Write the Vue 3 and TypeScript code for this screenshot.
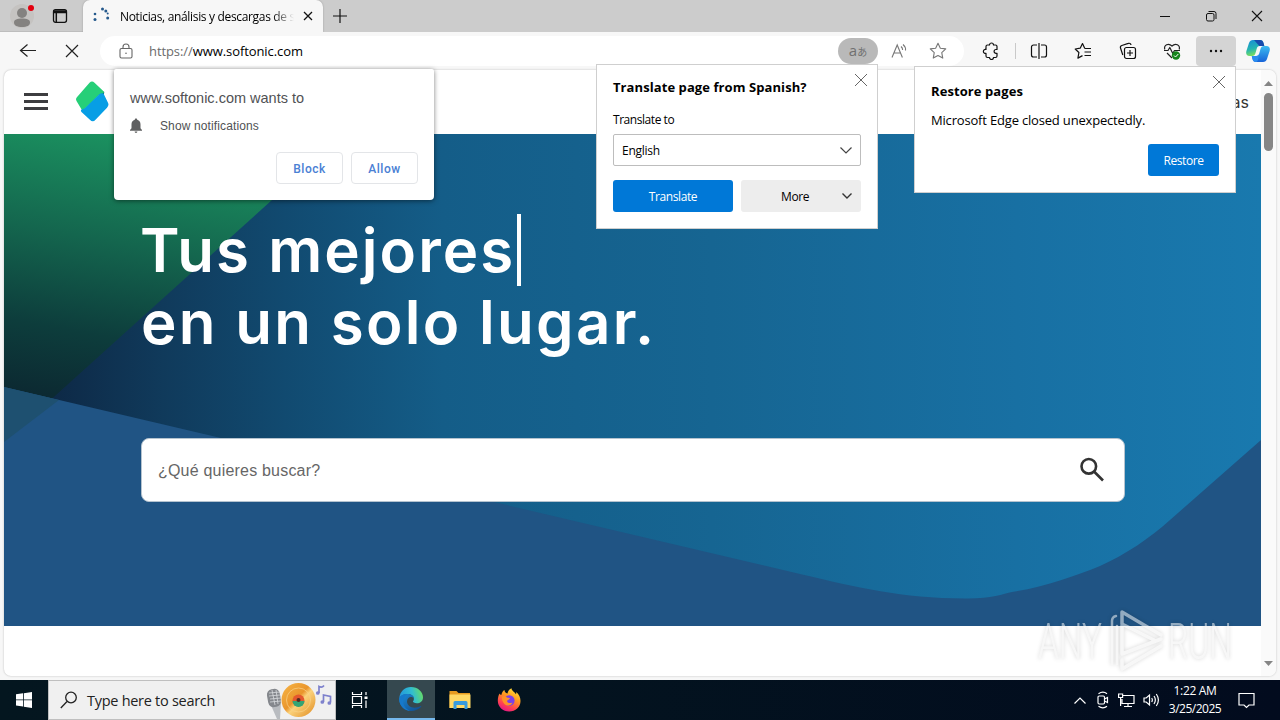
<script setup lang="ts">
import { ref } from 'vue'

const tabTitle = ref('Noticias, análisis y descargas de s')
const host = ref('www.softonic.com')
const language = ref('English')
const query = ref('')
const clock = ref({ time: '1:22 AM', date: '3/25/2025' })
</script>

<template>
  <div class="desktop">
    <div class="titlebar">
      <div class="tab-tools">
        <svg class="avatar" width="26" height="28" viewBox="0 0 26 28">
          <circle cx="13" cy="14" r="12" fill="#c5c3c1" />
          <circle cx="13" cy="11" r="5" fill="#848280" />
          <path d="M5 20.500c0-3 3-4 8-4s8 1 8 4-3 4.500-8 4.500-8-1.500-8-4.500z" fill="#848280" />
          <circle cx="22" cy="6" r="3" fill="#e3000f" />
        </svg>
        <svg width="16" height="16" viewBox="0 0 16 16" fill="none" stroke="#111" stroke-width="1.300">
          <rect x="1.500" y="1.700" width="13" height="12.600" rx="2" />
          <path d="M1.500 3h13M1.500 4.500h13M4.300 4v10" stroke-width="1.500" />
        </svg>
      </div>
      <div class="tab">
        <svg width="18" height="18" viewBox="0 0 18 18" fill="#25598c">
          <circle cx="3" cy="7" r="1.300" />
          <circle cx="3" cy="12.500" r="1.500" />
          <circle cx="10.500" cy="2" r="1.500" />
          <circle cx="13.800" cy="4" r="1.500" />
          <circle cx="15.700" cy="6.500" r="1" />
          <circle cx="15.700" cy="11" r="1.500" />
        </svg>
        <span class="tab-title">{{ tabTitle }}</span>
        <svg class="tab-close" width="10" height="10" viewBox="0 0 10 10" stroke="#111" stroke-width="1.300">
          <path d="M1 1l8 8M9 1L1 9" />
        </svg>
      </div>
      <svg class="new-tab" width="14" height="14" viewBox="0 0 14 14" stroke="#111" stroke-width="1.200">
        <path d="M7 0v14M0 7h14" />
      </svg>
      <div class="win-buttons">
        <svg width="12" height="12" viewBox="0 0 12 12" stroke="#111"><path d="M1 6.500h10" /></svg>
        <svg width="12" height="12" viewBox="0 0 12 12" fill="none" stroke="#111">
          <rect x="1.500" y="3.500" width="7.500" height="7.500" rx="1.500" />
          <path d="M3.500 1.500h5.500a2 2 0 0 1 2 2v5.500" />
        </svg>
        <svg width="12" height="12" viewBox="0 0 12 12" stroke="#111" stroke-width="1.100">
          <path d="M1 1l10 10M11 1L1 11" />
        </svg>
      </div>
    </div>

    <div class="toolbar">
      <div class="nav">
        <svg width="18" height="16" viewBox="0 0 18 16" fill="none" stroke="#222" stroke-width="1.200">
          <path d="M17 7.500H1.500M8.500 1.500l-7 6 7 6" />
        </svg>
        <svg width="14" height="14" viewBox="0 0 14 14" stroke="#222" stroke-width="1.200">
          <path d="M1 1l12 12M13 1L1 13" />
        </svg>
      </div>
      <div class="address">
        <svg class="lock" width="14" height="16" viewBox="0 0 14 16" fill="none" stroke="#666" stroke-width="1.100">
          <rect x="1" y="5.500" width="12" height="9.500" rx="1.500" />
          <path d="M4 5.500V4a3 3 0 0 1 6 0v1.500" />
          <circle cx="7" cy="10.300" r=".8" fill="#666" stroke="none" />
        </svg>
        <span class="url"><span class="scheme">https://</span>{{ host }}</span>
        <span class="translate-chip">a<small>あ</small></span>
        <svg class="read-aloud" width="18" height="16" viewBox="0 0 18 16" fill="none" stroke="#777" stroke-width="1.100">
          <path d="M1 14.500L6.200 2 11.400 14.500M2.900 10h6.600" />
          <path d="M10 3.500q1.800 1.500 1.600 3.500M12 1.500q3 2.500 2.500 6" />
        </svg>
        <svg class="star" width="18" height="18" viewBox="0 0 18 18" fill="none" stroke="#777" stroke-width="1.100" stroke-linejoin="round">
          <path d="M9 1.200l2.350 5 5.400.7-4 3.750 1 5.450L9 13.450 4.250 16.100l1-5.450-4-3.750 5.400-.7z" />
        </svg>
      </div>
      <div class="actions">
        <span class="slot">
          <svg width="18" height="18" viewBox="0 0 18 18" fill="none" stroke="#111" stroke-width="1.200" stroke-linejoin="round">
            <path d="M5.500 3h2a2 2 0 0 1 4 0h2q1.500 0 1.500 1.500v3h-1a1.800 1.800 0 0 0 0 3.800h1V14q0 1.500-1.500 1.500h-2a2 2 0 0 1-4 0h-2Q4 15.500 4 14v-2.700a2 2 0 1 1 0-3.800v-3Q4 3 5.500 3z" />
          </svg>
        </span>
        <span class="divider"></span>
        <span class="slot">
          <svg width="18" height="18" viewBox="0 0 18 18" fill="none" stroke="#111" stroke-width="1.200">
            <path d="M7 3H3.500a2 2 0 0 0-2 2v8a2 2 0 0 0 2 2H7M11 3h3.500a2 2 0 0 1 2 2v8a2 2 0 0 1-2 2H11M9 1v16" />
          </svg>
        </span>
        <span class="slot">
          <svg width="18" height="18" viewBox="0 0 18 18" fill="none" stroke="#111" stroke-width="1.200" stroke-linejoin="round">
            <path d="M10.700 6.200L8.500 1.500l-2.300 4.700-5 .8 3.700 3.500-1 5.600 4.600-2.500" />
            <path d="M10.500 6.500H17M10.500 10H17M10.500 13.500H17" />
          </svg>
        </span>
        <span class="slot">
          <svg width="18" height="18" viewBox="0 0 18 18" fill="none" stroke="#111" stroke-width="1.200">
            <rect x="5.500" y="5.500" width="11" height="11" rx="2" />
            <path d="M11 8v6M8 11h6M3.800 13L1.500 6a2 2 0 0 1 1.300-2.500l6.500-2.100A2 2 0 0 1 12 3" />
          </svg>
        </span>
        <span class="slot">
          <svg width="18" height="18" viewBox="0 0 18 18" fill="none" stroke="#222" stroke-width="1.200" stroke-linejoin="round">
            <path d="M1.800 7.500C.5 3 5.500.5 9 4c3.500-3.500 8.500-1 7.200 3.500M4 11l5 5" />
            <path d="M1 8.500h4L6.800 5.500l3 6L11.500 8.500H17" />
            <circle cx="13" cy="13.500" r="4.200" fill="#17851d" stroke="none" />
            <path d="M11 13.500l1.500 1.500 2.800-3" stroke="#fff" stroke-width="1" />
          </svg>
        </span>
        <span class="slot more-slot">
          <svg width="16" height="4" viewBox="0 0 16 4" fill="#111">
            <circle cx="3" cy="2" r="1.200" /><circle cx="8" cy="2" r="1.200" /><circle cx="13" cy="2" r="1.200" />
          </svg>
        </span>
        <svg class="copilot" width="24" height="24" viewBox="0 0 24 24">
          <defs>
            <linearGradient id="cp1" x1="0" y1="0" x2=".3" y2="1">
              <stop offset="0" stop-color="#168bd8" /><stop offset=".6" stop-color="#25b5b0" /><stop offset="1" stop-color="#7ce05a" />
            </linearGradient>
            <linearGradient id="cp2" x1="0" y1="0" x2="0" y2="1">
              <stop offset="0" stop-color="#3bbcf0" /><stop offset="1" stop-color="#1763d8" />
            </linearGradient>
          </defs>
          <path d="M7 1h7c2 0 3 1 3.500 3l.8 3h-4.500c-2 0-2.600 1-3 2.500L9.500 14c-.5 2-1.500 3-3.500 3H3.500C.5 17-.3 14.800.4 12L3 4C3.700 2 5 1 7 1z" fill="url(#cp1)" />
          <path d="M8 1h6c2 0 3 1 3.500 3l.8 3h-5z" fill="#174bad" />
          <path d="M17 23h-7c-2 0-3-1-3.500-3l-.8-3h4.500c2 0 2.600-1 3-2.500l1.300-4.500c.5-2 1.500-3 3.500-3h2.500c3 0 3.800 2.200 3.100 5L21 20c-.7 2-2 3-4 3z" fill="url(#cp2)" />
          <path d="M6 17h4.200c2 0 2.600-1 3-2.500l-1 5.500c-.4 2-1.200 3-2.200 3-2 0-3-1-3.500-3z" fill="#2a8df0" />
        </svg>
      </div>
    </div>

    <div class="viewport">
      <div class="page">
        <header class="site-header">
          <span class="burger"><i></i><i></i><i></i></span>
          <svg class="logo" width="34" height="42" viewBox="0 0 34 42">
            <path d="M21 12l8-1.500q1 2-2 5z" fill="#126c6b" />
            <path d="M14.500 1.800q2.500-2.600 5 0l8.500 8q2 2-.5 2.700-2.500.5-4 2L7.500 30 1.800 20.500q-1.800-2.500.5-4.700z" fill="#26cf78" />
            <path d="M28.500 12.500l4.500 9.200q1.300 2.700-1 5L20.500 38.800q-2.800 3-5.600 0L6.500 31q-1.500-2 .8-2.700 1.800-.4 3-1.600L24 13.500q2.300-2 4.500-1z" fill="#079ee5" />
          </svg>
          <span class="header-link">Noticias</span>
        </header>

        <section class="hero">
          <svg class="hero-art" viewBox="4 134 1257 492" width="1257" height="492">
            <defs>
              <linearGradient id="sea" gradientUnits="userSpaceOnUse" x1="40" y1="0" x2="1261" y2="0">
                <stop offset="0" stop-color="#0d2744" />
                <stop offset=".1" stop-color="#103a5b" />
                <stop offset=".2" stop-color="#114a70" />
                <stop offset=".33" stop-color="#145d88" />
                <stop offset=".55" stop-color="#166592" />
                <stop offset=".8" stop-color="#1870a3" />
                <stop offset="1" stop-color="#1979ae" />
              </linearGradient>
              <linearGradient id="leaf" gradientUnits="userSpaceOnUse" x1="70" y1="124" x2="22" y2="390">
                <stop offset="0" stop-color="#1b9260" />
                <stop offset=".4" stop-color="#14664e" />
                <stop offset=".75" stop-color="#0d3d3c" />
                <stop offset="1" stop-color="#0c2a32" />
              </linearGradient>
            </defs>
            <path d="M4 134h1257v492H4z" fill="url(#sea)" />
            <path d="M4 134h341L4 442z" fill="url(#leaf)" />
            <path d="M4 387L800 574C860 588 900 598 965 598.500C990 599 1003 594 1012 592C1045 587 1075 576 1100 566C1125 555 1150 538 1170 520L1261 440V626H4z" fill="#205484" />
            <path d="M4 387l55 13L4 442z" fill="#1e5070" />
          </svg>
          <div class="hero-body">
            <h1>
              <span class="line-a">Tus mejores</span><span class="caret"></span><br />
              <span class="line-b">en un solo lugar.</span>
            </h1>
            <div class="search">
              <input v-model="query" placeholder="¿Qué quieres buscar?" />
              <svg width="26" height="26" viewBox="0 0 26 26" fill="none" stroke="#333" stroke-width="2.600">
                <circle cx="9.800" cy="9.300" r="7.300" />
                <path d="M15 14.500l9 9" />
              </svg>
            </div>
          </div>
        </section>
      </div>
      <div class="scrollbar">
        <svg width="9" height="5" viewBox="0 0 9 5"><path d="M4.500 0L9 5H0z" fill="#858585" /></svg>
        <span class="thumb"></span>
        <svg width="9" height="5" viewBox="0 0 9 5"><path d="M0 0h9L4.500 5z" fill="#858585" /></svg>
      </div>
    </div>

    <div class="popup permission">
      <p class="asks">www.softonic.com wants to</p>
      <p class="what">
        <svg width="14" height="16" viewBox="0 0 14 16" fill="#5f6061">
          <path d="M7 .5c.8 0 1.200.5 1.200 1.300C10.500 2.400 11.500 4.200 11.500 6.500v3.700L13 12v.8H1V12l1.500-1.800V6.500c0-2.300 1-4.100 3.300-4.700C5.800 1 6.200.5 7 .5zM5.600 13.500h2.800a1.400 1.400 0 0 1-2.800 0z" />
        </svg>
        <span>Show notifications</span>
      </p>
      <div class="choice">
        <button type="button">Block</button>
        <button type="button">Allow</button>
      </div>
    </div>

    <div class="popup translate">
      <svg class="dismiss" width="12" height="12" viewBox="0 0 12 12" stroke="#666"><path d="M0 0l12 12M12 0L0 12" /></svg>
      <h2>Translate page from Spanish?</h2>
      <label>Translate to</label>
      <div class="select">
        <span>{{ language }}</span>
        <svg width="12" height="7" viewBox="0 0 12 7" fill="none" stroke="#444" stroke-width="1.200"><path d="M.5.5L6 6 11.500.5" /></svg>
      </div>
      <div class="choice">
        <button type="button" class="primary">Translate</button>
        <button type="button" class="secondary">
          <span>More</span>
          <svg width="10" height="6" viewBox="0 0 10 6" fill="none" stroke="#333" stroke-width="1.400"><path d="M.5.5L5 5 9.500.5" /></svg>
        </button>
      </div>
    </div>

    <div class="popup restore">
      <svg class="dismiss" width="12" height="12" viewBox="0 0 12 12" stroke="#666"><path d="M0 0l12 12M12 0L0 12" /></svg>
      <h2>Restore pages</h2>
      <p>Microsoft Edge closed unexpectedly.</p>
      <button type="button" class="primary">Restore</button>
    </div>

    <svg class="watermark" width="210" height="74" viewBox="1030 604 210 74">
      <g fill="none" stroke="#f2f2f2" stroke-width="3.500" stroke-linejoin="round" stroke-linecap="round">
        <path d="M1122 642V612L1161 635M1122 624L1154 640M1122 642V654L1161 639M1122 660V669L1161 646" />
        <path d="M1112 664V621q0-4 4-5M1117 664V626" stroke-width="2.500" />
      </g>
      <g font-family="Roboto, sans-serif" font-size="50" font-weight="300" fill="#f2f2f2">
        <text x="1038" y="659" textLength="64" lengthAdjust="spacingAndGlyphs">ANY</text>
        <text x="1168" y="659" textLength="64" lengthAdjust="spacingAndGlyphs">RUN</text>
      </g>
    </svg>

    <div class="taskbar">
      <div class="start">
        <svg width="16" height="16" viewBox="0 0 16 16" fill="#fff">
          <path d="M0 2.300l7-1v6.200H0zM7.800 1.200L16 0v7.500H7.800zM0 8.300h7v6.300l-7-1zM7.800 8.300H16V16l-8.200-1.200z" />
        </svg>
      </div>
      <div class="task-search">
        <svg width="18" height="18" viewBox="0 0 18 18" fill="none" stroke="#222" stroke-width="1.300">
          <circle cx="11" cy="6.500" r="5.300" /><path d="M7 10.500L.8 17" />
        </svg>
        <span>Type here to search</span>
        <svg class="doodle" width="68" height="38" viewBox="266 681 68 38">
          <defs>
            <linearGradient id="gold" x1="0" y1="0" x2="1" y2="1">
              <stop offset="0" stop-color="#f7b648" /><stop offset=".45" stop-color="#e9952c" />
              <stop offset=".55" stop-color="#fbd27c" /><stop offset="1" stop-color="#e08a1e" />
            </linearGradient>
          </defs>
          <path d="M270 703l7 16h3l1-17z" fill="#b9bcc0" />
          <rect x="267.500" y="689" width="13" height="18" rx="5.500" fill="#85888d" transform="rotate(-10 274 698)" />
          <path d="M269 693l11-1M269 696l11-1M270 699l11-1M270 702l11-1M272 690l3 15M276 690l2 14" stroke="#d8dadd" stroke-width=".8" />
          <circle cx="298.500" cy="700" r="17" fill="url(#gold)" />
          <circle cx="298.500" cy="700" r="12" fill="none" stroke="#f9d28a" stroke-width=".7" />
          <circle cx="298.500" cy="700.500" r="6" fill="#e4572e" />
          <path d="M292.500 701a6 6 0 0 0 12 0z" fill="#34a474" />
          <circle cx="298.500" cy="700" r="2" fill="#542c20" />
          <g fill="none" stroke="#7d80cc" stroke-width="1.700">
            <path d="M319 693v-6.500q3 1.500 5-1M323.500 702v-7l7 1.500v6" />
            <circle cx="317.800" cy="693" r="1" /><circle cx="322.300" cy="702" r="1" /><circle cx="329.300" cy="703" r="1" />
          </g>
        </svg>
      </div>
      <div class="task">
        <svg width="18" height="16" viewBox="0 0 18 16" fill="none" stroke="#fff" stroke-width="1.200">
          <path d="M1.500 0v2.500h9V0M1.500 16v-2.500h9V16M1.500 4.500h9v7h-9zM15 0v3M15 8.500V16" />
          <path d="M13.500 4.500h3v2.500h-3z" fill="#fff" stroke="none" />
        </svg>
      </div>
      <div class="task active">
        <svg width="24" height="24" viewBox="0 0 24 24">
          <defs>
            <linearGradient id="ed1" x1="0" y1=".5" x2="1" y2=".3">
              <stop offset="0" stop-color="#2296dc" /><stop offset=".55" stop-color="#31bdd0" /><stop offset="1" stop-color="#69dd60" />
            </linearGradient>
            <linearGradient id="ed2" x1="0" y1="0" x2="1" y2="1">
              <stop offset="0" stop-color="#1b8cd9" /><stop offset="1" stop-color="#114a8b" />
            </linearGradient>
          </defs>
          <path d="M.3 11C1 4.500 5.700 0 12 0c7 0 12 5 12 10.300 0 4-3 6-6.200 6-2.500 0-3.900-1-3.900-1.700 0-.6 1-1.100 1-2.900C14.900 9 12 7 8.500 7 4.500 7 1.500 9 .3 11z" fill="url(#ed1)" />
          <path d="M.3 11C1.500 8.500 4.500 7 8.500 7c3.500 0 6.400 2 6.400 4.700-.5-1-1.700-1.700-3-1.700-2 0-3.900 1.800-3.900 4.500 0 3.700 3.500 6.200 7.500 6.200 2.500 0 4.600-.7 6-1.600.5-.3 1 .2.600.7C20 22.500 16 24 12 24 5 24-.5 18 .3 11z" fill="url(#ed2)" />
          <path d="M8.500 7C5.500 9 3.800 12 4.300 16c.5 4 4 7.500 7.700 8C5 24-.5 18 .3 11 1.500 8.500 4.500 7 8.500 7z" fill="#1679cb" />
        </svg>
      </div>
      <div class="task">
        <svg width="22" height="20" viewBox="0 0 22 20">
          <path d="M.5 1h7l2 2H21v15H.5z" fill="#e79b20" />
          <path d="M.5 4.500H21.500V18H.5z" fill="#ffd865" />
          <path d="M4.500 19v-6.500q0-1.500 1.500-1.500h11q1.500 0 1.500 1.500V19h-3v-4h-8V19z" fill="#379bdd" />
        </svg>
      </div>
      <div class="task">
        <svg width="24" height="24" viewBox="0 0 24 24">
          <defs>
            <linearGradient id="fox" x1=".8" y1="0" x2=".3" y2="1">
              <stop offset="0" stop-color="#ffe63b" /><stop offset=".4" stop-color="#ff9a1f" />
              <stop offset=".75" stop-color="#ff4051" /><stop offset="1" stop-color="#e31587" />
            </linearGradient>
          </defs>
          <path d="M2.500 5.500c.5 1 1 1.300 1.800 1.500C5 4 6.500 2.500 7.500 2c0 2 1 3 3 3.500C11 3 12 1.500 14.500.3c0 2.500 3 3.500 4.500 6 .3-.8.300-1.500 0-2.300 3 2 4.500 5.500 4.500 9C23.500 19 18.500 23.500 12.200 23.500S.8 19 .8 12.800c0-3 .7-5.300 1.700-7.300z" fill="url(#fox)" />
          <circle cx="12.300" cy="12.500" r="5.300" fill="#7a40e8" />
          <path d="M5 8.500c2-1 4-.5 5 1 1 .3 2.500.2 3 .7-.5 1.500-2.500 1.300-3 2.800 0 2 3.500 2.700 5.500 1.500-1 3.500-5.500 4-8 1.500C5.500 14 4.500 11 5 8.500z" fill="#ff9226" />
        </svg>
      </div>
      <div class="tray">
        <svg width="12" height="7" viewBox="0 0 12 7" fill="none" stroke="#fff" stroke-width="1.200"><path d="M.5 6.500L6 1l5.500 5.500" /></svg>
        <svg width="14" height="18" viewBox="0 0 14 18" fill="none" stroke="#fff" stroke-width="1.200">
          <rect x="2" y="5" width="6.500" height="8" rx="1.200" />
          <path d="M8.500 8l3-1.500v5L8.500 10M2.500 2.700Q7-.5 11 2.700M2.500 15.300q4.500 3.200 8.500 0" />
        </svg>
        <svg width="17" height="16" viewBox="0 0 17 16" fill="none" stroke="#fff" stroke-width="1.200">
          <path d="M5 3.500h11v8H4V7M10 11.500v3M6 14.500h8M.6 2h4v3.500h-4zM2.600 5.500V14" />
        </svg>
        <svg width="17" height="14" viewBox="0 0 17 14" fill="none" stroke="#fff" stroke-width="1.200">
          <path d="M1 5h2.200L6.500 2v10L3.200 9H1zM8.700 5q1.300 2 0 4M11 3q2.700 4 0 8M13.300 1q4.200 6 0 12" />
        </svg>
        <div class="clock">
          <span>{{ clock.time }}</span>
          <span class="date">{{ clock.date }}</span>
        </div>
        <svg class="notes" width="17" height="17" viewBox="0 0 17 17" fill="none" stroke="#fff" stroke-width="1.200">
          <path d="M1 1.500h15v11.500h-5L8.500 15.500 6 13H1z" />
        </svg>
      </div>
    </div>
  </div>
</template>

<style>
body {
  margin: 0;
  overflow: hidden;
}
</style>

<style scoped>
.desktop {
  position: relative;
  width: 1280px;
  height: 720px;
  display: flex;
  flex-direction: column;
  overflow: hidden;
  background: #f7f7f7;
  font-family: 'Open Sans', 'Noto Sans CJK JP', sans-serif;
  font-size: 12px;
  color: #000;
}
svg {
  display: block;
  flex: none;
}
p,
h1,
h2 {
  margin: 0;
}
button {
  font: inherit;
  border: 0;
  padding: 0;
  box-sizing: border-box;
}

/* window frame */
.titlebar {
  display: flex;
  align-items: center;
  height: 32px;
  background: #ccc;
}
.tab-tools {
  display: flex;
  align-items: center;
  gap: 17px;
  width: 74px;
  height: 32px;
  padding-left: 9px;
  box-shadow: inset 0 -1px #bdbdbd;
}
.tab {
  display: flex;
  align-items: center;
  width: 231px;
  height: 32px;
  padding-left: 9px;
  background: #f7f7f7;
  border-radius: 7px 7px 0 0;
  box-shadow: 0 0 2px #999;
}
.tab-title {
  width: 174px;
  margin-left: 10px;
  white-space: nowrap;
  letter-spacing: -0.330px;
  mask-image: linear-gradient(90deg, #000 88%, transparent 100%);
}
.tab-close {
  margin-left: 9px;
}
.new-tab {
  margin-left: 10px;
}
.win-buttons {
  display: flex;
  gap: 34px;
  margin-left: auto;
  margin-right: 17px;
}
.toolbar {
  display: flex;
  align-items: center;
  height: 38px;
  background: #f7f7f7;
}
.nav {
  display: flex;
  align-items: center;
  gap: 28px;
  width: 81px;
  padding-left: 19px;
}
.address {
  display: flex;
  align-items: center;
  box-sizing: border-box;
  width: 864px;
  height: 30px;
  padding-left: 19px;
  border-radius: 15px;
  background: #fff;
}
.url {
  flex: 1;
  margin-left: 16px;
  font-size: 13px;
  letter-spacing: -0.080px;
}
.scheme {
  color: #6b6b6b;
}
.translate-chip {
  width: 40px;
  height: 26px;
  border-radius: 13px;
  background: #b9b9b9;
  color: #707070;
  font-size: 15px;
  line-height: 24px;
  text-align: center;
}
.translate-chip small {
  font-size: 10px;
}
.read-aloud {
  margin-left: 13px;
}
.star {
  margin: 0 17px 0 20px;
}
.actions {
  display: flex;
  align-items: center;
  margin-left: 5px;
}
.slot {
  display: flex;
  align-items: center;
  justify-content: center;
  width: 44.500px;
  height: 30px;
}
.divider {
  width: 1px;
  height: 16px;
  margin: 0 1px;
  background: #c9c9c9;
}
.more-slot {
  width: 40px;
  margin-left: 1px;
  border-radius: 4px;
  background: #d4d4d4;
}
.copilot {
  margin-left: 10px;
}

/* page */
.viewport {
  display: flex;
  height: 606px;
  margin: 0 4px 4px;
  background: #fff;
  border-radius: 7px;
  box-shadow: 0 0 2px #b5b5b5;
  overflow: hidden;
}
.page {
  width: 1257px;
}
.site-header {
  display: flex;
  align-items: center;
  box-sizing: border-box;
  height: 64px;
  padding: 0 12px 0 20px;
}
.burger {
  display: flex;
  flex-direction: column;
  gap: 4px;
  width: 24px;
  padding-bottom: 1px;
}
.burger i {
  height: 3px;
  background: #3d3d40;
}
.logo {
  margin-left: 27px;
}
.header-link {
  margin-left: auto;
  font-family: Inter, sans-serif;
  font-size: 16px;
  color: #333;
}
.hero {
  display: grid;
  height: 492px;
}
.hero-art,
.hero-body {
  grid-area: 1 / 1;
}
.hero-body {
  padding: 80px 136px 0 136px;
}
h1 {
  height: 144px;
  font-family: Inter, sans-serif;
  font-size: 60px;
  font-weight: 600;
  line-height: 72px;
  color: #fff;
  white-space: nowrap;
}
.line-a {
  letter-spacing: 2.050px;
}
.line-b {
  margin-left: 1px;
  letter-spacing: 2.300px;
}
.caret {
  display: inline-block;
  width: 4px;
  height: 72px;
  margin-left: 2px;
  background: #fff;
  vertical-align: top;
}
.search {
  display: flex;
  align-items: center;
  box-sizing: border-box;
  height: 64px;
  margin-top: 80px;
  margin-left: 1px;
  padding: 0 19px 0 16px;
  border: 1px solid #b5c3cf;
  border-radius: 8px;
  background: #fff;
}
.search input {
  flex: 1;
  border: 0;
  padding: 2px 0 0;
  outline: 0;
  font: 16px 'Liberation Sans', sans-serif;
  letter-spacing: 0.200px;
}
.search input::placeholder {
  color: #666;
}
.scrollbar {
  display: flex;
  flex-direction: column;
  align-items: center;
  width: 15px;
  padding: 11px 0 10px;
  box-sizing: border-box;
  background: #fafafa;
}
.thumb {
  width: 9px;
  height: 58px;
  margin: 7px 0 auto;
  border-radius: 5px;
  background: #868686;
}

/* floating dialogs */
.popup {
  position: absolute;
  box-sizing: border-box;
  background: #fff;
}
.permission {
  left: 114px;
  top: 69px;
  width: 320px;
  height: 131px;
  padding: 20px 16px 16px;
  border-radius: 2px 2px 4px 4px;
  box-shadow: 0 1px 5px rgba(0, 0, 0, 0.5);
  font-family: 'Liberation Sans', sans-serif;
  color: #505154;
}
.asks {
  font-size: 14.500px;
  line-height: 18px;
}
.what {
  display: flex;
  align-items: center;
  gap: 17px;
  height: 16px;
  margin-top: 11px;
  font-size: 12px;
  letter-spacing: 0.120px;
}
.what svg {
  margin-left: -1px;
}
.choice {
  display: flex;
  gap: 8px;
}
.permission .choice {
  justify-content: flex-end;
  margin-top: 18px;
}
.permission button {
  width: 67px;
  height: 32px;
  padding-top: 1px;
  border: 1px solid #e3e5e8;
  border-radius: 4px;
  background: #fff;
  color: #4a80d4;
  font: 500 12px Roboto, sans-serif;
  letter-spacing: 0.550px;
}
.translate {
  left: 596px;
  top: 64px;
  width: 282px;
  height: 165px;
  padding: 12px 16px 16px;
  border: 1px solid #cfcfcf;
}
.dismiss {
  position: absolute;
  top: 9px;
  right: 10px;
}
.popup h2 {
  font-size: 13px;
  font-weight: 700;
  line-height: 20px;
  letter-spacing: 0.080px;
  white-space: nowrap;
}
.translate label {
  display: block;
  margin-top: 15px;
  line-height: 16px;
  letter-spacing: -0.450px;
}
.select {
  display: flex;
  align-items: center;
  justify-content: space-between;
  box-sizing: border-box;
  height: 32px;
  margin-top: 6px;
  padding: 0 8px;
  border: 1px solid #bdbdbd;
  border-radius: 2px;
  letter-spacing: -0.250px;
}
.translate .choice {
  margin-top: 14px;
}
.translate button {
  width: 120px;
  height: 32px;
}
.popup .primary {
  border-radius: 3px;
  background: #0078d7;
  color: #fff;
  letter-spacing: -0.400px;
}
.popup .secondary {
  display: flex;
  align-items: center;
  padding: 0 9px 0 40px;
  justify-content: space-between;
  border-radius: 3px;
  background: #ededed;
  color: #000;
  letter-spacing: -0.350px;
}
.restore {
  left: 914px;
  top: 66px;
  width: 322px;
  height: 127px;
  padding: 14px 16px;
  border: 1px solid #cfcfcf;
}
.restore p {
  margin-top: 9px;
  font-size: 13px;
  line-height: 20px;
  letter-spacing: -0.180px;
  white-space: nowrap;
}
.restore button {
  display: block;
  width: 71px;
  height: 32px;
  margin: 14px 0 0 auto;
}

.watermark {
  position: absolute;
  left: 1030px;
  top: 604px;
  overflow: visible;
  opacity: 0.55;
  filter: drop-shadow(0 0 2px rgba(0, 0, 0, 0.3));
}

/* taskbar */
.taskbar {
  display: flex;
  height: 40px;
  background: linear-gradient(90deg, #04161f 0%, #03131f 45%, #020b1e 100%);
  color: #fff;
}
.start,
.task {
  display: flex;
  align-items: center;
  justify-content: center;
  width: 48px;
}
.task {
  width: 49px;
}
.task-search + .task {
  width: 51px;
  box-sizing: border-box;
  padding-right: 4px;
}
.task.active {
  box-sizing: border-box;
  width: 48px;
  background: #35484f;
  border-bottom: 2px solid #76b9ed;
}
.task-search {
  display: flex;
  align-items: center;
  box-sizing: border-box;
  width: 288px;
  padding-left: 11px;
  border: 1px solid #bfbfbf;
  background: #f0f0f0;
  color: #222;
  font-size: 14.500px;
  letter-spacing: -0.280px;
}
.task-search span {
  margin-left: 9px;
  white-space: nowrap;
}
.doodle {
  margin-left: auto;
  margin-right: 1px;
}
.tray {
  display: flex;
  align-items: center;
  gap: 8px;
  margin-left: auto;
  padding-right: 25px;
}
.tray > svg:first-child {
  margin-right: 2px;
}
.clock {
  display: flex;
  flex-direction: column;
  align-items: center;
  width: 54px;
  line-height: 18px;
  letter-spacing: -0.350px;
}
.date {
  letter-spacing: -0.500px;
}
.notes {
  margin-left: 8px;
}
</style>
